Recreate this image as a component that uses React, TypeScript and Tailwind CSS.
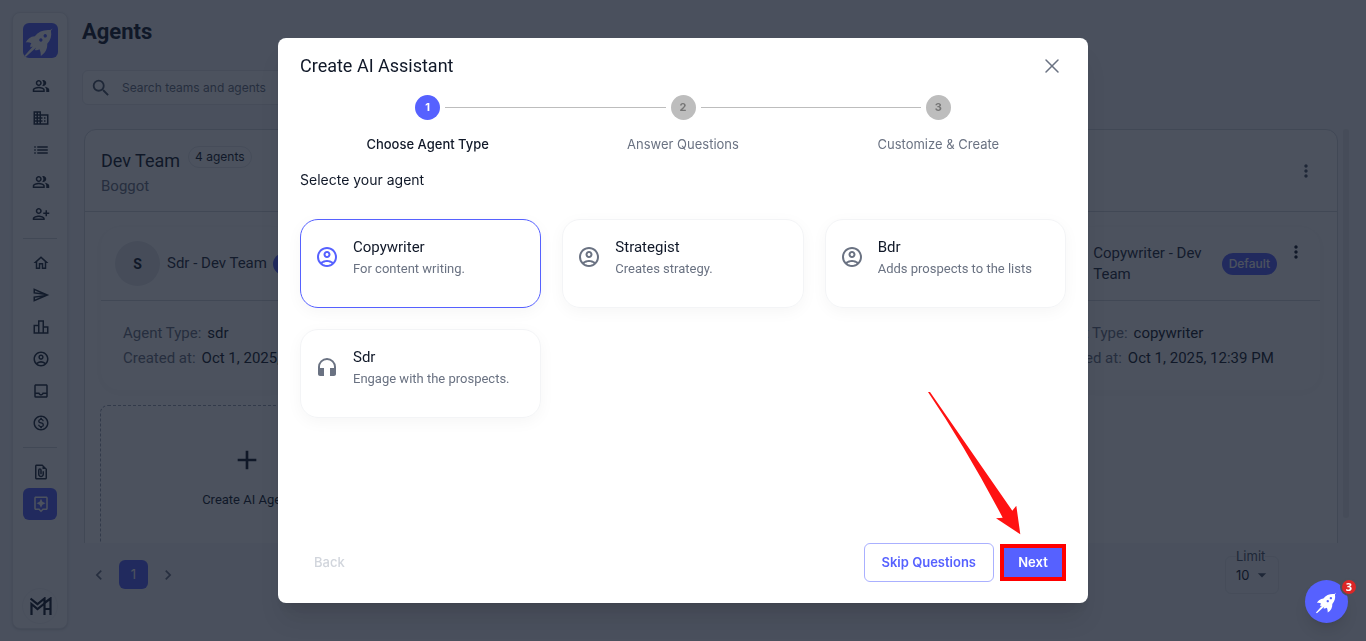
import { useState } from 'react'
import type { ReactNode } from 'react'
import type { IconType } from 'react-icons'
import {
  MdAdd, MdArrowDropDown, MdChevronLeft, MdChevronRight, MdHeadphones, MdList, MdMoreVert,
  MdOutlineAccountCircle, MdOutlineAssistant, MdOutlineBusiness, MdOutlineFilePresent,
  MdOutlineHome, MdOutlineInbox, MdOutlineLeaderboard, MdOutlineMonetizationOn,
  MdOutlinePeopleAlt, MdOutlinePersonAddAlt1, MdOutlineSend, MdSearch,
} from 'react-icons/md'
import { X } from 'lucide-react'

type NavItem = { label: string; icon: IconType; active?: boolean }

// Sidebar entries, one array per divider-separated group.
const NAV: NavItem[][] = [
  [
    { label: 'Contacts', icon: MdOutlinePeopleAlt },
    { label: 'Companies', icon: MdOutlineBusiness },
    { label: 'Lists', icon: MdList },
    { label: 'Teams', icon: MdOutlinePeopleAlt },
    { label: 'Invite', icon: MdOutlinePersonAddAlt1 },
  ],
  [
    { label: 'Home', icon: MdOutlineHome },
    { label: 'Campaigns', icon: MdOutlineSend },
    { label: 'Reports', icon: MdOutlineLeaderboard },
    { label: 'Account', icon: MdOutlineAccountCircle },
    { label: 'Inbox', icon: MdOutlineInbox },
    { label: 'Billing', icon: MdOutlineMonetizationOn },
  ],
  [
    { label: 'Files', icon: MdOutlineFilePresent },
    { label: 'Agents', icon: MdOutlineAssistant, active: true },
  ],
]

const AGENTS = [
  { name: 'Sdr - Dev Team', type: 'sdr', created: 'Oct 1, 2025, 12:39 PM' },
  { name: 'Strategist - Dev Team', type: 'strategist', created: 'Oct 1, 2025, 12:39 PM' },
  { name: 'Bdr - Dev Team', type: 'bdr', created: 'Oct 1, 2025, 12:39 PM' },
  { name: 'Copywriter - Dev Team', type: 'copywriter', created: 'Oct 1, 2025, 12:39 PM' },
]

const STEPS = ['Choose Agent Type', 'Answer Questions', 'Customize & Create']

const AGENT_TYPES: { name: string; text: string; icon: IconType }[] = [
  { name: 'Copywriter', text: 'For content writing.', icon: MdOutlineAccountCircle },
  { name: 'Strategist', text: 'Creates strategy.', icon: MdOutlineAccountCircle },
  { name: 'Bdr', text: 'Adds prospects to the lists', icon: MdOutlineAccountCircle },
  { name: 'Sdr', text: 'Engage with the prospects.', icon: MdHeadphones },
]

function Rocket({ className }: { className: string }) {
  return (
    <svg viewBox="0 0 104 104" className={className} aria-hidden>
      <path
        fill="currentColor"
        fillRule="evenodd"
        d="M88 16 L83 23 C86 38 82 51 72 62 C73 77 66 90 53 98 C53 90 52 84 49 78 C44 81 40 82 35 80 L39 73 L8 101 L4 98 L29 70 L22 72 C21 68 22 64 25 60 C19 57 14 57 8 58 C13 47 22 40 35 39 C46 25 63 19 81 21 Z M53 45.500 a5 5 0 1 0 0.100 0 Z M66 33 a5 5 0 1 0 0.100 0 Z"
      />
    </svg>
  )
}

function BrandMark() {
  return (
    <svg viewBox="0 0 22 18" className="h-[18px] w-[22px]" fill="none" stroke="currentColor" aria-hidden>
      <path d="M0.500 1.500L7.500 7L14.500 1.500V6L20.500 1.500V18" strokeWidth={2.2} />
      <path d="M1.500 18V7L7.500 12L14.500 6.500V18M14.500 12H20.500" strokeWidth={2.2} />
    </svg>
  )
}

function Sidebar() {
  return (
    <nav className="flex w-14 shrink-0 flex-col items-center rounded-lg border border-gray-200 bg-white pt-[10px] pb-1 shadow-sm">
      <a href="#" aria-label="Dashboard" className="mb-3 flex size-[35px] items-center justify-center rounded-md bg-[#5661ff] text-white">
        <Rocket className="size-[35px]" />
      </a>
      {NAV.map((group, i) => (
        <div key={i} className="flex flex-col items-center">
          {i > 0 && <hr className="my-2 w-[34px] border-gray-300" />}
          {group.map(({ label, icon: Icon, active }) => (
            <a
              key={label}
              href="#"
              aria-label={label}
              className={`flex h-8 w-[34px] items-center justify-center rounded-md pl-[2px] ${active ? 'bg-[#5661ff] text-white' : 'text-gray-800'}`}
            >
              <Icon size={18} />
            </a>
          ))}
        </div>
      ))}
      <a href="#" aria-label="Workspace" className="mt-auto flex size-9 items-center justify-center rounded-full border border-gray-100 pl-[2px] text-gray-900">
        <BrandMark />
      </a>
    </nav>
  )
}

function AgentCard({ name, type, created }: { name: string; type: string; created: string }) {
  return (
    <article className="rounded-[20px] border border-gray-50 shadow-[0_2px_12px_rgba(0,0,0,0.04)]">
      <div className="flex h-[74px] items-center border-b border-gray-300 px-[14px]">
        <span className="flex size-[45px] shrink-0 items-center justify-center rounded-full bg-gray-200 text-sm font-bold text-gray-900">{name[0]}</span>
        <h3 className="ml-[7px] text-[15px] leading-[21px] text-gray-800">{name}</h3>
        <span className="ml-[6px] shrink-0 rounded-full bg-[#5661ff] px-[7px] font-[Inter,sans-serif] text-xs leading-[22px] font-medium text-white">Default</span>
        <button type="button" aria-label="Agent menu" className="mb-6 ml-auto shrink-0 pl-[9px] text-gray-900"><MdMoreVert size={20} /></button>
      </div>
      <dl className="px-[22px] pt-5 pb-[19px] text-[15px] leading-[25px]">
        <div className="flex gap-[6px]"><dt className="text-gray-500">Agent Type:</dt><dd className="text-gray-900">{type}</dd></div>
        <div className="flex gap-[6px]"><dt className="text-gray-500">Created at:</dt><dd className="whitespace-nowrap text-gray-900">{created}</dd></div>
      </dl>
    </article>
  )
}

function TeamPanel() {
  return (
    <div className="flex min-h-0 flex-1 overflow-hidden pl-[2px]">
      <section className="flex h-[600px] min-w-0 flex-1 flex-col rounded-xl border border-gray-300 bg-white">
        <header className="flex h-[82px] items-center justify-between border-b border-gray-300 px-4">
          <div>
            <div className="flex items-center gap-2">
              <h2 className="text-lg leading-6 text-gray-900">Dev Team</h2>
              <span className="mb-2 rounded-full border border-gray-200 px-[6px] font-[Inter,sans-serif] text-xs leading-5 text-gray-900">4 agents</span>
            </div>
            <p className="text-[15px] leading-5 text-gray-500">Boggot</p>
          </div>
          <button type="button" aria-label="Team menu" className="mr-[5px] text-gray-600"><MdMoreVert size={20} /></button>
        </header>
        <div className="grid grid-cols-4 gap-[14px] pt-[14px] pr-4 pl-[15px]">
          {AGENTS.map(a => <AgentCard key={a.name} {...a} />)}
          <button type="button" className="flex h-[165px] flex-col items-center rounded-lg border border-dashed border-gray-400 pt-[38px] text-[13px] text-gray-900">
            <MdAdd size={32} />
            <span className="mt-[14px] leading-5">Create AI Agent</span>
          </button>
        </div>
      </section>
      <div className="ml-[5px] h-[389px] w-[6px] rounded-full bg-gray-200" />
    </div>
  )
}

function Pagination() {
  return (
    <footer className="flex h-[98px] shrink-0 items-start justify-between pr-[70px] pl-[7px]">
      <div className="mt-[17px] flex items-center gap-[10px] font-[Inter,sans-serif]">
        <button type="button" aria-label="Previous page" className="text-gray-500"><MdChevronLeft size={20} /></button>
        <button type="button" className="size-[29px] rounded-md bg-[#5661ff] text-[13px] text-white">1</button>
        <button type="button" aria-label="Next page" className="text-gray-500"><MdChevronRight size={20} /></button>
      </div>
      <fieldset className="mt-1 w-[54px] rounded-md border border-gray-200 pl-[10px] font-[Inter,sans-serif] text-[13px]">
        <legend className="leading-[18px] text-gray-600"><label htmlFor="limit">Limit</label></legend>
        <div className="flex h-7 items-start">
          <select id="limit" defaultValue="10" className="w-4 appearance-none leading-5 text-gray-900">
            <option>10</option>
            <option>25</option>
          </select>
          <MdArrowDropDown size={20} className="text-gray-600" />
        </div>
      </fieldset>
    </footer>
  )
}

function Stepper() {
  return (
    <ol className="mt-[17px] grid grid-cols-3 font-[Inter,sans-serif]">
      {STEPS.map((step, i) => (
        <li key={step} className="flex flex-col items-center">
          <div className="flex w-full items-center gap-[5px]">
            <span className={`h-px flex-1 ${i > 0 ? 'bg-[#bdbdbd]' : ''}`} />
            <span className={`flex size-[25px] items-center justify-center rounded-full text-[11px] font-bold ${i === 0 ? 'bg-[#5661ff] text-white' : 'bg-[#bdbdbd] text-[#757575]'}`}>{i + 1}</span>
            <span className={`h-px flex-1 ${i < STEPS.length - 1 ? 'bg-[#bdbdbd]' : ''}`} />
          </div>
          <span className={`mt-[14px] text-[13px] leading-5 ${i === 0 ? 'font-medium text-gray-900' : 'text-gray-500'}`}>{step}</span>
        </li>
      ))}
    </ol>
  )
}

// Red pointer drawn over the dialog, aimed at the Next button.
function Pointer() {
  return (
    <svg viewBox="928 391 93 144" className="pointer-events-none absolute right-[67px] bottom-[68px] h-36 w-[93px]" aria-hidden>
      <path fill="#ff1212" d="M928 392 L930 392 L1012.300 510.700 L1016.300 505.700 L1020.300 534.300 L996 518.300 L1002.700 517.700 Q966 448 928 392 Z" />
    </svg>
  )
}

function Modal({ children }: { children: ReactNode }) {
  return (
    <div className="fixed inset-0 flex items-center justify-center bg-gray-900/75">
      <div role="dialog" aria-labelledby="dialog-title" className="relative flex min-h-[565px] w-full max-w-[810px] flex-col rounded-lg bg-white px-[22px] pt-4 pb-[21px] shadow-xl">
        {children}
      </div>
    </div>
  )
}

function CreateAssistant() {
  const [selected, setSelected] = useState('Copywriter')
  return (
    <Modal>
      <div className="flex items-center justify-between">
        <h2 id="dialog-title" className="text-lg leading-6 text-gray-900">Create AI Assistant</h2>
        <button type="button" aria-label="Close" className="mr-[2px] text-gray-500"><X size={24} strokeWidth={1.5} /></button>
      </div>
      <Stepper />
      <p className="mt-4 font-[Inter,sans-serif] text-sm leading-5 text-gray-900">Selecte your agent</p>
      <div className="mt-[29px] grid grid-cols-3 gap-[21px]">
        {AGENT_TYPES.map(({ name, text, icon: Icon }) => (
          <button
            key={name}
            type="button"
            aria-pressed={selected === name}
            onClick={() => setSelected(name)}
            className={`flex h-[89px] gap-[14px] rounded-[18px] border px-[14px] pt-[17px] text-left shadow-[0_4px_16px_rgba(0,0,0,0.04)] ${selected === name ? 'border-[#5661ff]' : 'border-gray-100'}`}
          >
            <Icon size={24} className={`mt-2 shrink-0 ${selected === name ? 'text-[#5661ff]' : 'text-gray-500'}`} />
            <span className="flex flex-col">
              <span className="text-[15px] leading-[21px] text-gray-900">{name}</span>
              <span className="text-[13px] leading-[21px] text-gray-500">{text}</span>
            </span>
          </button>
        ))}
      </div>
      <div className="mt-auto flex items-center font-[Inter,sans-serif] text-[13px] font-semibold">
        <button type="button" disabled className="mr-auto px-[14px] font-medium text-gray-300">Back</button>
        <button type="button" className="h-[39px] rounded-md border border-[#5661ff]/50 px-[17px] text-[#5661ff]">Skip Questions</button>
        <button type="button" className="ml-[6px] h-[37px] w-[66px] border-4 border-[#ff0000] bg-[#5661ff] text-white">Next</button>
      </div>
      <Pointer />
    </Modal>
  )
}

export default function App() {
  return (
    <div className="flex h-screen gap-[14px] overflow-hidden bg-[#f5f6fa] py-3 pl-3 font-[Roboto,sans-serif]">
      <Sidebar />
      <main className="-mb-3 flex min-w-0 flex-1 flex-col pr-[17px]">
        <h1 className="mt-1 text-[22px] leading-8 font-bold text-gray-900">Agents</h1>
        <div className="mt-[22px] mb-6 flex h-[35px] w-full max-w-sm shrink-0 items-center rounded-md border border-gray-200 bg-white pl-[7px]">
          <MdSearch size={22} className="text-gray-600" />
          <input type="text" aria-label="Search" placeholder="Search teams and agents" className="ml-[10px] flex-1 font-[Inter,sans-serif] text-xs text-gray-900 outline-none placeholder:text-gray-500" />
        </div>
        <TeamPanel />
        <Pagination />
      </main>
      <CreateAssistant />
      <button type="button" aria-label="Open assistant" className="fixed right-[18px] bottom-[18px] flex size-[43px] items-center justify-center rounded-full bg-[#5661ff] pl-[2px] text-white shadow-lg">
        <Rocket className="size-[25px]" />
        <span className="absolute -top-[2px] -right-[10px] flex size-[18px] items-center justify-center rounded-full border-2 border-[#4a505c] bg-[#dc2626] font-[Open_Sans,sans-serif] text-[11px] font-bold">3</span>
      </button>
    </div>
  )
}
